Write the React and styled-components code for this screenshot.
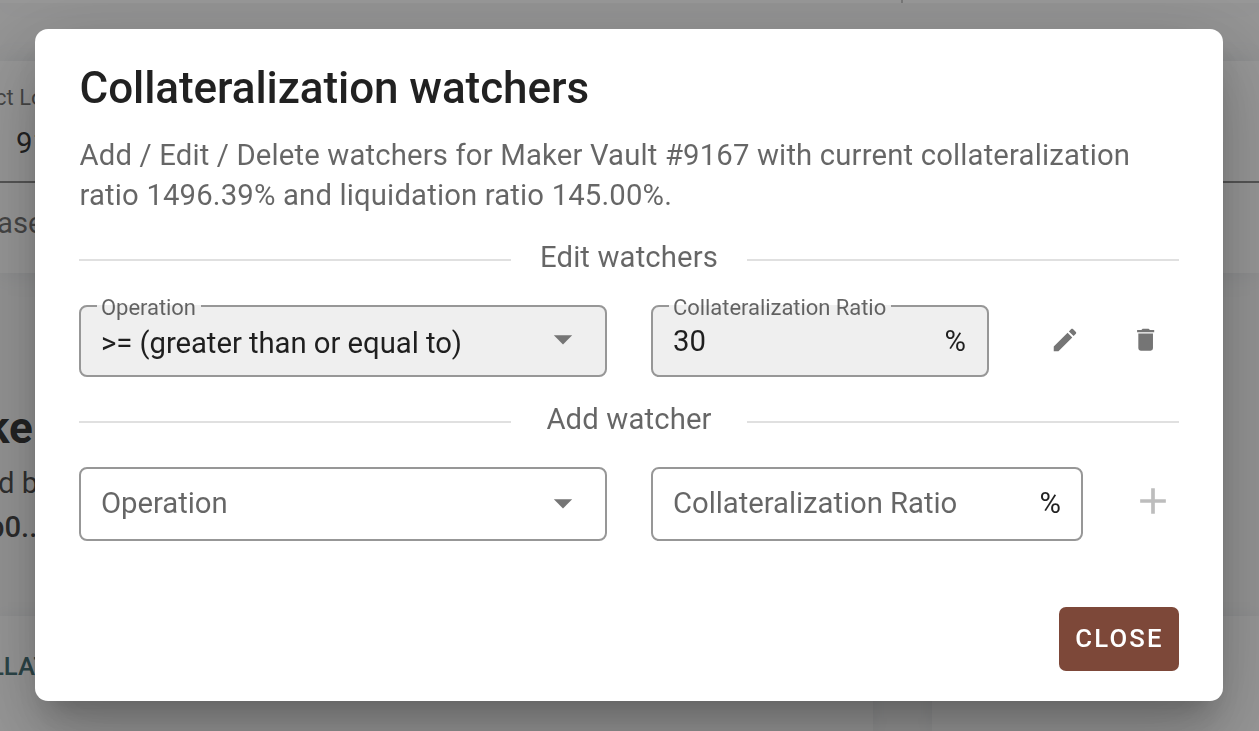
import React from "react";
import styled, { createGlobalStyle } from "styled-components";

const GlobalStyle = createGlobalStyle`
  *, *::before, *::after { box-sizing: border-box; }
  html, body { margin: 0; height: 100%; overflow: hidden; }
  body {
    font-family: Roboto, "Liberation Sans", sans-serif;
    color: rgba(0, 0, 0, 0.87);
    background: #fafafa;
  }
  fieldset { margin: 0; min-width: 0; }
`;

const Page = styled.div`
  display: flex;
  flex-direction: column;
  width: 1259px;
  height: 731px;
  overflow: hidden;
`;

const TopBar = styled.header`
  height: 3px;
  padding-left: 901px;
  background: #fff;
  box-shadow: 0 1px 24px rgba(70, 85, 120, 0.16);
`;

const TopBarTick = styled.div`
  width: 2px;
  height: 3px;
  background: #c4c4c4;
`;

const FormCard = styled.section`
  height: 212px;
  margin-top: 58px;
  padding-top: 20px;
  background: #fff;
  box-shadow: 0 0 24px rgba(70, 90, 120, 0.13);
`;

const FormValue = styled.div`
  height: 102px;
  border-bottom: 2px solid #858585;
`;

const Summary = styled.section`
  height: 343px;
  padding-top: 127px;
`;

const BottomRow = styled.section`
  display: flex;
  gap: 59px;
  height: 115px;
`;

const BottomCard = styled.div`
  width: ${(p) => p.$width}px;
  padding-top: 30px;
  background: #fff;
  box-shadow: 0 0 16px rgba(70, 90, 120, 0.09);
`;

const PageText = styled.div`
  height: ${(p) => p.$line}px;
  line-height: ${(p) => p.$line}px;
  font-size: ${(p) => p.$size}px;
  font-weight: ${(p) => p.$weight || 400};
  color: ${(p) => p.$color || "rgba(0, 0, 0, 0.87)"};
  text-indent: ${(p) => p.$indent || 0}px;
  white-space: nowrap;
`;

const Scrim = styled.div`
  position: fixed;
  inset: 0;
  padding: 29px 36px 30px 35px;
  background: rgba(33, 33, 33, 0.46);
`;

const Dialog = styled.div`
  display: flex;
  flex-direction: column;
  width: 1188px;
  height: 672px;
  padding: 32px 44px 30px;
  border-radius: 13px;
  background: #fff;
  box-shadow:
    0 20px 28px -13px rgba(0, 0, 0, 0.2),
    0 44px 70px 6px rgba(0, 0, 0, 0.14),
    0 17px 84px 15px rgba(0, 0, 0, 0.12);
`;

const Title = styled.h1`
  margin: 0 0 0 0.5px;
  height: 54px;
  line-height: 54px;
  font-size: 44px;
  font-weight: 500;
  letter-spacing: -0.07px;
  white-space: nowrap;
`;

const Description = styled.p`
  margin: 20px 0 0 0.5px;
  line-height: 40px;
  font-size: 29.3px;
  letter-spacing: 0.15px;
  color: rgba(0, 0, 0, 0.6);
  white-space: nowrap;
`;

const SectionDivider = styled.div`
  display: grid;
  grid-template-columns: 432px 1fr 432px;
  align-items: center;
  height: 40px;
  margin-top: ${(p) => p.$top}px;
`;

const Rule = styled.div`
  height: 2px;
  margin-top: 6px;
  background: #e0e0e0;
`;

const SectionName = styled.div`
  text-align: center;
  line-height: 40px;
  font-size: 29.3px;
  letter-spacing: 0.12px;
  color: rgba(0, 0, 0, 0.6);
`;

const WatcherRow = styled.div`
  display: flex;
  align-items: center;
  height: ${(p) => p.$height}px;
  margin-top: ${(p) => p.$top}px;
`;

const Field = styled.div`
  position: relative;
  display: flex;
  flex: none;
  align-items: center;
  width: ${(p) => p.$width}px;
  height: 100%;
  padding: 0 22px 0 22px;
  & + & { margin-left: 44px; }
`;

const Outline = styled.fieldset`
  position: absolute;
  inset: ${(p) => (p.$notched ? "-12px 0 0" : "0")};
  padding: 0 0 0 16px;
  border: 2px solid #979797;
  border-radius: 8px;
  background: ${(p) => (p.$filled ? "#efefef" : "transparent")};
`;

const FieldLabel = styled.legend`
  height: 26px;
  padding: 0 5px 0 4px;
  line-height: 29px;
  font-size: 22px;
  letter-spacing: -0.05px;
  color: rgba(0, 0, 0, 0.6);
  white-space: nowrap;
`;

const FieldText = styled.span`
  position: relative;
  flex: 1;
  padding-top: ${(p) => p.$drop || 0}px;
  padding-bottom: ${(p) => p.$lift || 0}px;
  line-height: 36px;
  font-size: 29.3px;
  letter-spacing: -0.05px;
  color: ${(p) => (p.$muted ? "rgba(0, 0, 0, 0.6)" : "rgba(0, 0, 0, 0.87)")};
  white-space: nowrap;
`;

const Suffix = styled.span`
  position: relative;
  padding: 0 ${(p) => (p.$lift ? 0 : 1)}px ${(p) => p.$lift || 0}px 0;
  line-height: 36px;
  font-size: 29.3px;
`;

const Svg = styled.svg`
  position: relative;
  display: block;
  flex: none;
  width: ${(p) => p.$size}px;
  height: ${(p) => p.$size}px;
  margin-bottom: ${(p) => p.$lift || 0}px;
  fill: ${(p) => p.$color || "#757575"};
`;

const IconButton = styled.button`
  display: grid;
  flex: none;
  place-items: center;
  width: 66px;
  height: 66px;
  margin: 0 0 ${(p) => p.$lift || 3}px ${(p) => p.$left}px;
  padding: 0;
  border: 0;
  background: none;
`;

const Actions = styled.div`
  display: flex;
  justify-content: flex-end;
  margin-top: auto;
`;

const CloseButton = styled.button`
  width: 120px;
  height: 64px;
  padding: 0 0 2px 1px;
  border: 0;
  border-radius: 7px;
  background: #7d4839;
  color: #fff;
  font-family: inherit;
  font-size: 25.7px;
  font-weight: 500;
  letter-spacing: 2.2px;
`;

const icons = {
  arrow: "M7 10l5 5 5-5z",
  pencil:
    "M20.71,7.04C21.1,6.65 21.1,6 20.71,5.63L18.37,3.29C18,2.9 17.35,2.9 16.96,3.29L15.12,5.12L18.87,8.87M3,17.25V21H6.75L17.81,9.93L14.06,6.18L3,17.25Z",
  trash:
    "M19,4H15.5L14.5,3H9.5L8.5,4H5V6H19M6,19A2,2 0 0,0 8,21H16A2,2 0 0,0 18,19V7H6V19Z",
  plus: "M19,13H13V19H11V13H5V11H11V5H13V11H19V13Z",
};

function Icon({ name, size, color, lift }) {
  return (
    <Svg viewBox="0 0 24 24" $size={size} $color={color} $lift={lift} aria-hidden="true">
      <path d={icons[name]} />
    </Svg>
  );
}

function OutlinedField({ width, label, filled, children }) {
  return (
    <Field $width={width}>
      <Outline $notched={Boolean(label)} $filled={filled}>
        {label && <FieldLabel>{label}</FieldLabel>}
      </Outline>
      {children}
    </Field>
  );
}

function Divider({ top, children }) {
  return (
    <SectionDivider $top={top}>
      <Rule />
      <SectionName>{children}</SectionName>
      <Rule />
    </SectionDivider>
  );
}

export default function App() {
  return (
    <>
      <GlobalStyle />
      <Page>
        <TopBar>
          <TopBarTick />
        </TopBar>
        <FormCard>
          <FormValue>
            <PageText $size={22} $line={34} $indent={-5} $color="rgba(0,0,0,.6)">
              ct Lo
            </PageText>
            <PageText $size={29.3} $line={56} $indent={16}>
              91
            </PageText>
          </FormValue>
          <PageText $size={29.3} $line={80} $indent={-3} $color="rgba(0,0,0,.6)">
            ase
          </PageText>
        </FormCard>
        <Summary>
          <PageText $size={44} $line={56} $weight={700} $indent={-14}>
            ke
          </PageText>
          <PageText $size={29.3} $line={54} $indent={-2} $color="rgba(0,0,0,.75)">
            d b
          </PageText>
          <PageText $size={29.3} $line={34} $weight={500} $indent={-12} $color="rgba(0,0,0,.8)">
            b0..
          </PageText>
        </Summary>
        <BottomRow>
          <BottomCard $width={873}>
            <PageText $size={25.7} $line={40} $weight={500} $indent={-10} $color="#37656a">
              LLAT
            </PageText>
          </BottomCard>
          <BottomCard $width={327} />
        </BottomRow>
      </Page>
      <Scrim>
        <Dialog role="dialog">
          <Title>Collateralization watchers</Title>
          <Description>
            Add / Edit / Delete watchers for Maker Vault #9167 with current collateralization
            <br />
            ratio 1496.39% and liquidation ratio 145.00%.
          </Description>
          <Divider top={22}>Edit watchers</Divider>
          <WatcherRow $height={72} $top={28}>
            <OutlinedField width={528} label="Operation" filled>
              <FieldText $drop={4}>&gt;= (greater than or equal to)</FieldText>
              <Icon name="arrow" size={44} lift={4} />
            </OutlinedField>
            <OutlinedField width={338} label="Collateralization Ratio" filled>
              <FieldText>30</FieldText>
              <Suffix>%</Suffix>
            </OutlinedField>
            <IconButton $left={43} aria-label="Edit">
              <Icon name="pencil" size={30} />
            </IconButton>
            <IconButton $left={15} aria-label="Delete">
              <Icon name="trash" size={29.3} />
            </IconButton>
          </WatcherRow>
          <Divider top={22}>Add watcher</Divider>
          <WatcherRow $height={74} $top={28}>
            <OutlinedField width={528}>
              <FieldText $muted $lift={2}>Operation</FieldText>
              <Icon name="arrow" size={44} lift={2} />
            </OutlinedField>
            <OutlinedField width={432}>
              <FieldText $muted $lift={2}>Collateralization Ratio</FieldText>
              <Suffix $lift={2}>%</Suffix>
            </OutlinedField>
            <IconButton $left={37} $lift={7} aria-label="Add">
              <Icon name="plus" size={44} color="#bdbdbd" />
            </IconButton>
          </WatcherRow>
          <Actions>
            <CloseButton>CLOSE</CloseButton>
          </Actions>
        </Dialog>
      </Scrim>
    </>
  );
}
